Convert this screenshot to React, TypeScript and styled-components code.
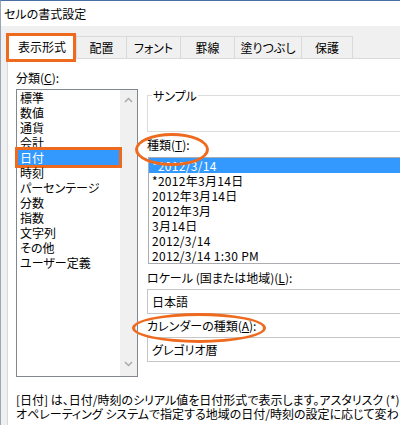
import React from "react";
import styled, { createGlobalStyle, css } from "styled-components";

const GlobalStyle = createGlobalStyle`
  html, body { margin: 0; padding: 0; background: #ffffff; }
  body {
    font-family: "Noto Sans CJK JP", "Noto Sans", sans-serif;
    font-size: 12px;
    color: #000;
    font-feature-settings: "palt" 1;
  }
  * { box-sizing: border-box; }
`;

const ORANGE = "#ee6a1e";

const Window = styled.div`
  width: 400px;
  height: 425px;
  overflow: hidden;
  border-top: 1px solid #4b6fa5;
  border-left: 1px solid #9aa5b5;
  display: flex;
  flex-direction: column;
  background: #f0f0f0;
`;

const TitleBar = styled.div`
  height: 25px;
  flex: none;
  background: #ffffff;
  padding-left: 3px;
  line-height: 25px;
  font-size: 12px;
`;

const Body = styled.div`
  flex: 1;
  padding: 10px 0 0 6px;
  display: flex;
  flex-direction: column;
`;

const TabStrip = styled.div`
  display: flex;
  align-items: flex-end;
  height: 22px;
  flex: none;
  position: relative;
  z-index: 1;
`;

const Tab = styled.div<{ $w: number; $selected?: boolean }>`
  position: relative;
  width: ${(p) => p.$w}px;
  height: 22px;
  margin-right: -1px;
  border: 1px solid #d9d9d9;
  border-bottom: none;
  background: #f0f0f0;
  display: flex;
  align-items: center;
  justify-content: center;
  line-height: 15px;
  white-space: nowrap;
  ${(p) =>
    p.$selected &&
    css`
      height: 25px;
      margin-bottom: -1px;
      background: #ffffff;
      z-index: 2;
      padding-bottom: 2px;
      &::after {
        content: "";
        position: absolute;
        left: -2px;
        top: -2px;
        right: 0px;
        bottom: -3px;
        border: 3px solid ${ORANGE};
      }
    `}
`;

const Panel = styled.div`
  flex: 1;
  background: #ffffff;
  border-top: 1px solid #d9d9d9;
  border-left: 1px solid #d9d9d9;
  padding: 11px 0 0 8px;
  display: flex;
  flex-direction: column;
`;

const Columns = styled.div`
  display: flex;
  gap: 9px;
  align-items: flex-start;
`;

const LeftCol = styled.div`
  width: 122px;
  flex: none;
  display: flex;
  flex-direction: column;
`;

const RightCol = styled.div`
  width: 290px;
  flex: none;
  display: flex;
  flex-direction: column;
  padding-top: 18px;
`;

const Label = styled.div<{ $mt?: number }>`
  line-height: 15px;
  margin-top: ${(p) => p.$mt ?? 0}px;
  white-space: nowrap;
  u { text-decoration: underline; text-underline-offset: 1px; }
`;

const Circled = styled.span<{ $l: number; $t: number; $w: number; $h: number }>`
  position: relative;
  display: inline-block;
  &::after {
    content: "";
    position: absolute;
    left: ${(p) => p.$l}px;
    top: ${(p) => p.$t}px;
    width: ${(p) => p.$w}px;
    height: ${(p) => p.$h}px;
    border: 3px solid ${ORANGE};
    border-radius: 50%;
  }
`;

const CategoryBox = styled.div`
  margin-top: 4px;
  height: 288px;
  border: 1px solid #828790;
  display: flex;
`;

const CategoryItems = styled.div`
  width: 103px;
  display: flex;
  flex-direction: column;
`;

const CategoryItem = styled.div<{ $selected?: boolean }>`
  position: relative;
  height: 15px;
  line-height: 15px;
  margin-left: 1px;
  padding-left: 2px;
  white-space: nowrap;
  ${(p) =>
    p.$selected &&
    css`
      background: #3399ff;
      color: #ffffff;
      &::after {
        content: "";
        position: absolute;
        left: -3px;
        right: -2px;
        top: -3px;
        bottom: -3px;
        border: 3px solid ${ORANGE};
      }
    `}
`;

const ScrollBar = styled.div`
  width: 17px;
  background: #f0f0f0;
  display: flex;
  flex-direction: column;
  justify-content: space-between;
  align-items: center;
  padding: 7px 0 9px;
`;

const Chevron = ({ down }: { down?: boolean }) => (
  <svg width="9" height="6" viewBox="0 0 9 6">
    <path
      d={down ? "M1 1 L4.5 4.5 L8 1" : "M1 5 L4.5 1.5 L8 5"}
      fill="none"
      stroke="#a6a6a6"
      strokeWidth="1.4"
    />
  </svg>
);

const SampleBox = styled.fieldset`
  margin: 0;
  padding: 0 4px;
  border: 1px solid #dcdcdc;
  min-width: 0;
  legend {
    padding: 0 1px;
    line-height: 15px;
    font-size: 12px;
  }
`;

const SampleInner = styled.div`
  height: 28px;
`;

const TypeList = styled.div`
  margin-top: 5px;
  margin-left: 1px;
  border: 1px solid #abadb3;
  display: flex;
  flex-direction: column;
`;

const TypeItem = styled.div<{ $selected?: boolean }>`
  height: 15px;
  line-height: 15px;
  padding-left: 3px;
  white-space: nowrap;
  letter-spacing: 0.3px;
  ${(p) =>
    p.$selected &&
    css`
      background: #3399ff;
      color: #ffffff;
    `}
`;

const ComboBox = styled.div<{ $mt: number }>`
  margin-top: ${(p) => p.$mt}px;
  height: 25px;
  border: 1px solid #c6c6c6;
  padding-left: 4px;
  display: flex;
  align-items: center;
  white-space: nowrap;
`;

const Description = styled.div`
  margin-top: 16px;
  display: flex;
  flex-direction: column;
`;

const DescLine = styled.div`
  line-height: 14px;
  white-space: nowrap;
`;

const tabs = [
  { label: "表示形式", w: 70, selected: true },
  { label: "配置", w: 51 },
  { label: "フォント", w: 55 },
  { label: "罫線", w: 55 },
  { label: "塗りつぶし", w: 68 },
  { label: "保護", w: 52 },
];

const categories = [
  "標準",
  "数値",
  "通貨",
  "会計",
  "日付",
  "時刻",
  "パーセンテージ",
  "分数",
  "指数",
  "文字列",
  "その他",
  "ユーザー定義",
];

const types = [
  "*2012/3/14",
  "*2012年3月14日",
  "2012年3月14日",
  "2012年3月",
  "3月14日",
  "2012/3/14",
  "2012/3/14 1:30 PM",
];

export default function App() {
  return (
    <>
      <GlobalStyle />
      <Window>
        <TitleBar>セルの書式設定</TitleBar>
        <Body>
          <TabStrip>
            {tabs.map((t) => (
              <Tab key={t.label} $w={t.w} $selected={t.selected}>
                {t.label}
              </Tab>
            ))}
          </TabStrip>
          <Panel>
            <Columns>
              <LeftCol>
                <Label>
                  分類(<u>C</u>):
                </Label>
                <CategoryBox>
                  <CategoryItems>
                    {categories.map((c) => (
                      <CategoryItem key={c} $selected={c === "日付"}>
                        {c}
                      </CategoryItem>
                    ))}
                  </CategoryItems>
                  <ScrollBar>
                    <Chevron />
                    <Chevron down />
                  </ScrollBar>
                </CategoryBox>
              </LeftCol>
              <RightCol>
                <SampleBox>
                  <legend>サンプル</legend>
                  <SampleInner />
                </SampleBox>
                <Label $mt={5}>
                  <Circled $l={-12} $t={-4} $w={68} $h={27}>
                    種類(<u>T</u>):
                  </Circled>
                </Label>
                <TypeList>
                  {types.map((t, i) => (
                    <TypeItem key={i} $selected={i === 0}>
                      {t}
                    </TypeItem>
                  ))}
                </TypeList>
                <Label $mt={6}>
                  ロケール (国または地域)(<u>L</u>):
                </Label>
                <ComboBox $mt={4}>日本語</ComboBox>
                <Label $mt={4}>
                  <Circled $l={-15} $t={-5} $w={128} $h={24}>
                    カレンダーの種類(<u>A</u>):
                  </Circled>
                </Label>
                <ComboBox $mt={4}>グレゴリオ暦</ComboBox>
              </RightCol>
            </Columns>
            <Description>
              <DescLine>
                [日付] は、日付/時刻のシリアル値を日付形式で表示します。アスタリスク (*) で始まる日付形式は、
              </DescLine>
              <DescLine>
                オペレーティング システムで指定する地域の日付/時刻の設定に応じて変わります。アスタリスクのない形式は、
              </DescLine>
            </Description>
          </Panel>
        </Body>
      </Window>
    </>
  );
}
